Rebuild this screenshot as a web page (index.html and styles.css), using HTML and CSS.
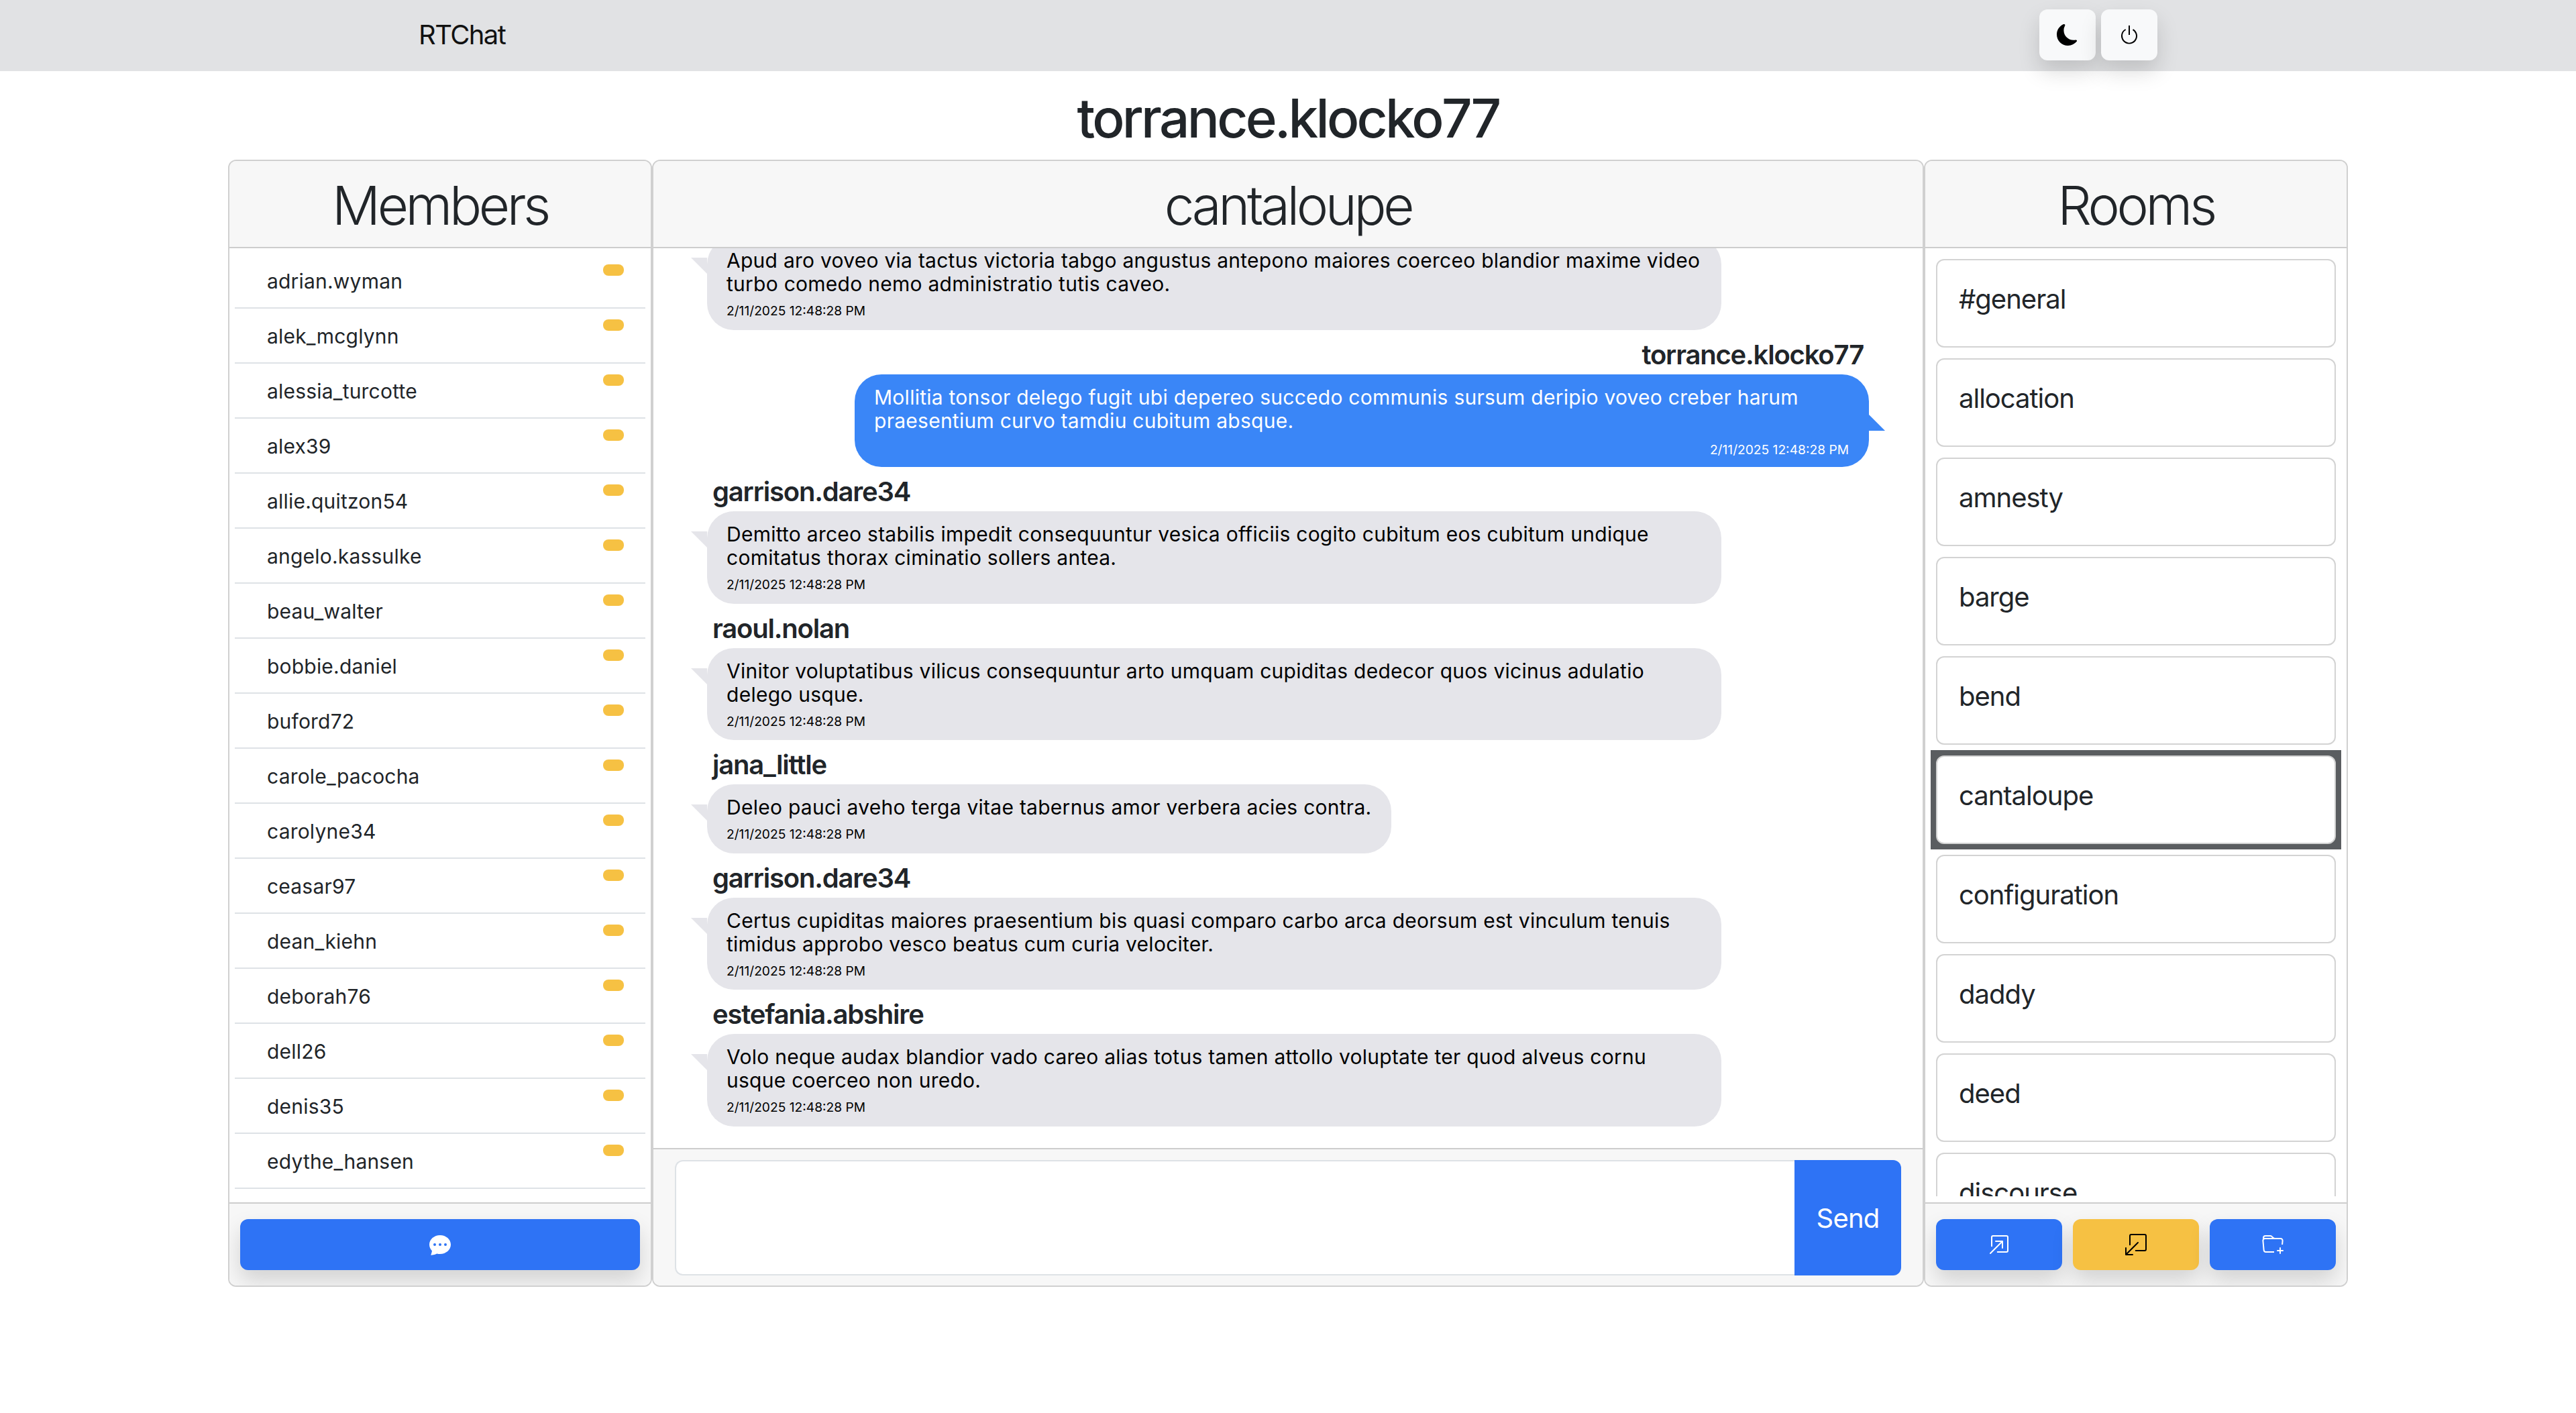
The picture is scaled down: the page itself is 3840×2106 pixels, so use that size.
FILE: index.html
```html
<!DOCTYPE html>
<html lang="en">
<head>
    <meta charset="UTF-8">
    <title>RTChat</title>
    <link rel="stylesheet" href="styles.css">
</head>
<body>
    <nav class="navbar">
        <span class="brand">RTChat</span>
        <div class="nav-buttons">
            <button class="nav-btn" type="button">
                <svg class="icon" viewBox="0 0 16 16"><path d="M6 .278a.768.768 0 0 1 .08.858 7.208 7.208 0 0 0-.878 3.46c0 4.021 3.278 7.277 7.318 7.277.527 0 1.04-.055 1.533-.16a.787.787 0 0 1 .81.316.733.733 0 0 1-.031.893A8.349 8.349 0 0 1 8.344 16C3.734 16 0 12.286 0 7.71 0 4.266 2.114 1.312 5.124.06A.752.752 0 0 1 6 .278z"/></svg>
            </button>
            <button class="nav-btn" type="button">
                <svg class="icon" viewBox="0 0 16 16"><path d="M7.5 1v7h1V1h-1z"/><path d="M3 8.812a4.999 4.999 0 0 1 2.578-4.375l-.485-.874A6 6 0 1 0 11 3.616l-.501.865A5 5 0 1 1 3 8.812z"/></svg>
            </button>
        </div>
    </nav>

    <h2 class="username">torrance.klocko77</h2>

    <main class="chat-layout">
        <!-- Members -->
        <section class="card">
            <h1 class="card-header">Members</h1>
            <ul class="member-list">
                <li class="member">adrian.wyman<span class="badge"></span></li>
                <li class="member">alek_mcglynn<span class="badge"></span></li>
                <li class="member">alessia_turcotte<span class="badge"></span></li>
                <li class="member">alex39<span class="badge"></span></li>
                <li class="member">allie.quitzon54<span class="badge"></span></li>
                <li class="member">angelo.kassulke<span class="badge"></span></li>
                <li class="member">beau_walter<span class="badge"></span></li>
                <li class="member">bobbie.daniel<span class="badge"></span></li>
                <li class="member">buford72<span class="badge"></span></li>
                <li class="member">carole_pacocha<span class="badge"></span></li>
                <li class="member">carolyne34<span class="badge"></span></li>
                <li class="member">ceasar97<span class="badge"></span></li>
                <li class="member">dean_kiehn<span class="badge"></span></li>
                <li class="member">deborah76<span class="badge"></span></li>
                <li class="member">dell26<span class="badge"></span></li>
                <li class="member">denis35<span class="badge"></span></li>
                <li class="member">edythe_hansen<span class="badge"></span></li>
            </ul>
            <div class="card-footer">
                <button class="btn btn-primary" type="button">
                    <svg class="icon" viewBox="0 0 16 16"><path d="M16 8c0 3.866-3.582 7-8 7a9.06 9.06 0 0 1-2.347-.306c-.584.296-1.925.864-4.181 1.234-.2.032-.352-.176-.273-.362.354-.836.674-1.95.77-2.966C.744 11.37 0 9.76 0 8c0-3.866 3.582-7 8-7s8 3.134 8 7zM5 8a1 1 0 1 0-2 0 1 1 0 0 0 2 0zm4 0a1 1 0 1 0-2 0 1 1 0 0 0 2 0zm3 1a1 1 0 1 0 0-2 1 1 0 0 0 0 2z"/></svg>
                </button>
            </div>
        </section>

        <!-- Current room -->
        <section class="card">
            <h1 class="card-header">cantaloupe</h1>
            <div class="messages">
                <div class="message">
                    <div class="bubble">
                        <p>Apud aro voveo via tactus victoria tabgo angustus antepono maiores coerceo blandior maxime video turbo comedo nemo administratio tutis caveo.</p>
                        <small>2/11/2025 12:48:28 PM</small>
                    </div>
                </div>
                <div class="message mine">
                    <h5 class="sender">torrance.klocko77</h5>
                    <div class="bubble">
                        <p>Mollitia tonsor delego fugit ubi depereo succedo communis sursum deripio voveo creber harum praesentium curvo tamdiu cubitum absque.</p>
                        <small>2/11/2025 12:48:28 PM</small>
                    </div>
                </div>
                <div class="message">
                    <h5 class="sender">garrison.dare34</h5>
                    <div class="bubble">
                        <p>Demitto arceo stabilis impedit consequuntur vesica officiis cogito cubitum eos cubitum undique comitatus thorax ciminatio sollers antea.</p>
                        <small>2/11/2025 12:48:28 PM</small>
                    </div>
                </div>
                <div class="message">
                    <h5 class="sender">raoul.nolan</h5>
                    <div class="bubble">
                        <p>Vinitor voluptatibus vilicus consequuntur arto umquam cupiditas dedecor quos vicinus adulatio delego usque.</p>
                        <small>2/11/2025 12:48:28 PM</small>
                    </div>
                </div>
                <div class="message">
                    <h5 class="sender">jana_little</h5>
                    <div class="bubble">
                        <p>Deleo pauci aveho terga vitae tabernus amor verbera acies contra.</p>
                        <small>2/11/2025 12:48:28 PM</small>
                    </div>
                </div>
                <div class="message">
                    <h5 class="sender">garrison.dare34</h5>
                    <div class="bubble">
                        <p>Certus cupiditas maiores praesentium bis quasi comparo carbo arca deorsum est vinculum tenuis timidus approbo vesco beatus cum curia velociter.</p>
                        <small>2/11/2025 12:48:28 PM</small>
                    </div>
                </div>
                <div class="message">
                    <h5 class="sender">estefania.abshire</h5>
                    <div class="bubble">
                        <p>Volo neque audax blandior vado careo alias totus tamen attollo voluptate ter quod alveus cornu usque coerceo non uredo.</p>
                        <small>2/11/2025 12:48:28 PM</small>
                    </div>
                </div>
            </div>
            <form class="card-footer send-form">
                <textarea class="send-input"></textarea>
                <button class="send-btn" type="button">Send</button>
            </form>
        </section>

        <!-- Rooms -->
        <section class="card">
            <h1 class="card-header">Rooms</h1>
            <div class="rooms-body">
                <div class="room-list">
                    <button class="room" type="button">#general</button>
                    <button class="room" type="button">allocation</button>
                    <button class="room" type="button">amnesty</button>
                    <button class="room" type="button">barge</button>
                    <button class="room" type="button">bend</button>
                    <button class="room active" type="button">cantaloupe</button>
                    <button class="room" type="button">configuration</button>
                    <button class="room" type="button">daddy</button>
                    <button class="room" type="button">deed</button>
                    <button class="room" type="button">discourse</button>
                </div>
            </div>
            <div class="card-footer room-actions">
                <button class="btn btn-primary" type="button">
                    <svg class="icon" viewBox="0 0 16 16"><path fill-rule="evenodd" d="M6.364 13.5a.5.5 0 0 0 .5.5H13.5a1.5 1.5 0 0 0 1.5-1.5v-10A1.5 1.5 0 0 0 13.5 1h-10A1.5 1.5 0 0 0 2 2.5v6.636a.5.5 0 1 0 1 0V2.5a.5.5 0 0 1 .5-.5h10a.5.5 0 0 1 .5.5v10a.5.5 0 0 1-.5.5H6.864a.5.5 0 0 0-.5.5z"/><path fill-rule="evenodd" d="M11 5.5a.5.5 0 0 0-.5-.5h-5a.5.5 0 0 0 0 1h3.793l-8.147 8.146a.5.5 0 0 0 .708.708L10 6.707V10.5a.5.5 0 0 0 1 0v-5z"/></svg>
                </button>
                <button class="btn btn-warning" type="button">
                    <svg class="icon" viewBox="0 0 16 16"><path fill-rule="evenodd" d="M7.364 12.5a.5.5 0 0 0 .5.5H14.5a1.5 1.5 0 0 0 1.5-1.5v-10A1.5 1.5 0 0 0 14.5 0h-10A1.5 1.5 0 0 0 3 1.5v6.636a.5.5 0 1 0 1 0V1.5a.5.5 0 0 1 .5-.5h10a.5.5 0 0 1 .5.5v10a.5.5 0 0 1-.5.5H7.864a.5.5 0 0 0-.5.5z"/><path fill-rule="evenodd" d="M0 15.5a.5.5 0 0 0 .5.5h5a.5.5 0 0 0 0-1H1.707l8.147-8.146a.5.5 0 0 0-.708-.708L1 14.293V10.5a.5.5 0 0 0-1 0v5z"/></svg>
                </button>
                <button class="btn btn-primary" type="button">
                    <svg class="icon" viewBox="0 0 16 16"><path d="m.5 3 .04.87a1.99 1.99 0 0 0-.342 1.311l.637 7A2 2 0 0 0 2.826 14H9v-1H2.826a1 1 0 0 1-.995-.91l-.637-7A1 1 0 0 1 2.19 4h11.62a1 1 0 0 1 .996 1.09L14.54 8h1.005l.256-2.819A2 2 0 0 0 13.81 3H9.828a2 2 0 0 1-1.414-.586l-.828-.828A2 2 0 0 0 6.172 1H2.5a2 2 0 0 0-2 2zm5.672-1a1 1 0 0 1 .707.293L7.586 3H2.19c-.24 0-.47.042-.683.12L1.5 2.98a1 1 0 0 1 1-.98h3.672z"/><path d="M13.5 10a.5.5 0 0 1 .5.5V12h1.5a.5.5 0 1 1 0 1H14v1.5a.5.5 0 1 1-1 0V13h-1.5a.5.5 0 0 1 0-1H13v-1.5a.5.5 0 0 1 .5-.5z"/></svg>
                </button>
            </div>
        </section>
    </main>
</body>
</html>
```

FILE: styles.css
```css
* {
    box-sizing: border-box;
}

body {
    margin: 0;
    height: 2106px;
    overflow: hidden;
    background-color: #fff;
    color: #212529;
    font-family: Inter, "Liberation Sans", sans-serif;
}

button, textarea {
    font-family: inherit;
}

.icon {
    width: 32px;
    height: 32px;
    fill: currentColor;
    display: block;
}

/* top bar */
.navbar {
    height: 106px;
    padding: 14px 624px 0;
    display: flex;
    justify-content: space-between;
    align-items: flex-start;
    background-color: #e1e2e4;
}

.brand {
    font-size: 40px;
    line-height: 76px;
    letter-spacing: -1.6px;
    color: #111;
}

.nav-buttons {
    display: flex;
    gap: 8px;
}

.nav-btn {
    width: 84px;
    height: 76px;
    border: 0;
    border-radius: 12px;
    background-color: #f8f9fa;
    color: #000;
    display: flex;
    align-items: center;
    justify-content: center;
    box-shadow: 0 16px 32px rgba(0, 0, 0, 0.15);
}

.username {
    height: 132px;
    margin: 0;
    padding-top: 22px;
    text-align: center;
    font-size: 80px;
    line-height: 96px;
    font-weight: 500;
    letter-spacing: -3.7px;
}

/* three cards */
.chat-layout {
    width: 3160px;
    height: 1680px;
    margin: 0 auto;
    display: grid;
    grid-template-columns: 632px 1896px 632px;
}

.card {
    min-height: 0;
    display: flex;
    flex-direction: column;
    border: 2px solid #d0d0d0;
    border-radius: 12px;
    overflow: hidden;
}

.card-header {
    flex: none;
    height: 130px;
    margin: 0;
    padding-top: 2px;
    text-align: center;
    font-size: 80px;
    line-height: 128px;
    font-weight: 300;
    letter-spacing: -4.4px;
    background-color: #f7f7f7;
    border-bottom: 2px solid #cdcdcd;
}

.card-footer {
    flex: none;
    height: 124px;
    padding: 23px 16px;
    background-color: #f7f7f7;
    border-top: 2px solid #cdcdcd;
}

.btn {
    width: 100%;
    height: 76px;
    border: 0;
    border-radius: 12px;
    display: flex;
    align-items: center;
    justify-content: center;
    box-shadow: 0 16px 32px rgba(0, 0, 0, 0.15);
}

.btn-primary {
    background-color: #2e73f5;
    color: #fff;
}

.btn-warning {
    background-color: #f6c143;
    color: #000;
}

/* members */
.member-list {
    flex: 1;
    min-height: 0;
    margin: 0;
    padding: 8px;
    list-style: none;
    overflow: hidden;
}

.member {
    height: 82px;
    padding: 16px 32px 0 48px;
    display: flex;
    justify-content: space-between;
    align-items: flex-start;
    border-bottom: 2px solid #dee2e6;
    font-size: 30px;
    line-height: 50px;
    letter-spacing: 0.2px;
}

.badge {
    width: 31px;
    height: 17px;
    border-radius: 8px;
    background-color: #f6c143;
}

/* messages */
.messages {
    flex: 1;
    min-height: 0;
    padding: 0 80px 16px;
    display: flex;
    flex-direction: column;
    justify-content: flex-end;
    overflow: hidden;
}

.message {
    flex: none;
    margin-bottom: 16px;
    display: flex;
    flex-direction: column;
    align-items: flex-start;
}

.message.mine {
    align-items: flex-end;
}

.sender {
    margin: -3px 0 5px 8px;
    font-size: 40px;
    line-height: 48px;
    font-weight: 600;
    letter-spacing: -1.2px;
}

.mine .sender {
    margin: -3px 8px 5px 0;
}

.bubble {
    position: relative;
    max-width: 1512px;
    padding: 17px 30px 16.6px 29px;
    border-radius: 40px;
    background-color: #e5e5ea;
    color: #000;
}

.bubble p {
    margin: 0;
    font-size: 30px;
    line-height: 35px;
    letter-spacing: 0.26px;
}

.bubble small {
    display: block;
    margin-top: 10px;
    font-size: 19.2px;
    line-height: 24px;
}

.bubble::before {
    content: "";
    position: absolute;
    left: -24px;
    top: 30px;
    border-top: 24px solid #e5e5ea;
    border-left: 24px solid transparent;
}

.mine .bubble {
    padding-bottom: 14.5px;
    background-color: #3a86f7;
    color: #fff;
}

.mine .bubble small {
    margin-top: 13px;
    text-align: right;
}

.mine .bubble::before {
    left: auto;
    right: -24px;
    top: 60px;
    border-top: 0;
    border-left: 0;
    border-bottom: 24px solid #3a86f7;
    border-right: 24px solid transparent;
}

/* send box */
.send-form {
    height: 205px;
    padding: 16px 32px 15px;
    display: flex;
}

.send-input {
    flex: 1;
    border: 2px solid #dee2e6;
    border-right: 0;
    border-radius: 12px 0 0 12px;
    background-color: #fff;
    resize: none;
}

.send-btn {
    width: 159px;
    border: 0;
    border-radius: 0 12px 12px 0;
    background-color: #2e73f5;
    color: #fff;
    font-size: 40px;
    letter-spacing: -0.8px;
}

/* rooms */
.rooms-body {
    flex: 1;
    min-height: 0;
    padding: 16px 8px 9px;
    display: flex;
}

.room-list {
    flex: 1;
    min-height: 0;
    padding: 0 8px;
    display: flex;
    flex-direction: column;
    gap: 16px;
    overflow: hidden;
}

.room {
    flex: none;
    height: 132px;
    padding: 0 32px 14px;
    border: 2px solid #d3d3d3;
    border-radius: 12px;
    background-color: #fff;
    color: #212529;
    text-align: left;
    font-size: 40px;
    letter-spacing: -1px;
}

/* square focus ring behind the button, an outline would follow the radius */
.room.active {
    position: relative;
}

.room.active::before {
    content: "";
    position: absolute;
    inset: -10px;
    z-index: -1;
    background-color: #5a5d60;
}

.room-actions {
    display: grid;
    grid-template-columns: 1fr 1fr 1fr;
    gap: 16px;
}
```
